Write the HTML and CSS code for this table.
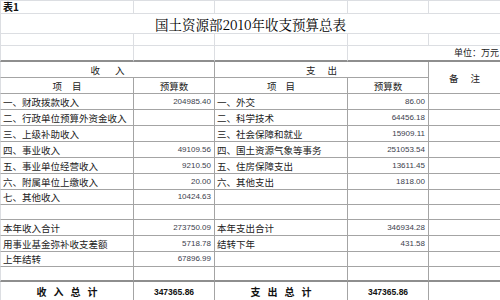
FILE: index.html
```html
<!DOCTYPE html>
<html lang="zh-CN">
<head>
<meta charset="utf-8">
<title>国土资源部2010年收支预算总表</title>
<link rel="stylesheet" href="styles.css">
</head>
<body>
<table class="sheet">
  <colgroup>
    <col class="c-item"><col class="c-num"><col class="c-item2"><col class="c-num"><col class="c-note">
  </colgroup>
  <tr class="r13 top">
    <td class="g tag">表1</td><td class="g"></td><td class="g"></td><td class="g"></td><td class="g last"></td>
  </tr>
  <tr class="r20 top">
    <td class="g title last" colspan="5">国土资源部2010年收支预算总表</td>
  </tr>
  <tr class="r12 top">
    <td class="g"></td><td class="g"></td><td class="g"></td><td class="g"></td><td class="g last"></td>
  </tr>
  <tr class="r16 unitrow">
    <td class="g"></td><td class="g"></td><td class="g"></td><td class="g unit last" colspan="2">单位：万元</td>
  </tr>
  <tr class="r16">
    <td class="center sp-in" colspan="2">收入</td>
    <td class="center sp-out" colspan="2">支出</td>
    <td class="center sp-note last" rowspan="2">备注</td>
  </tr>
  <tr class="r16">
    <td class="center sp-item">项目</td>
    <td class="center">预算数</td>
    <td class="center sp-item2">项目</td>
    <td class="center">预算数</td>
  </tr>
  <tr class="r16">
    <td>一、财政拨款收入</td><td class="num">204985.40</td>
    <td>一、外交</td><td class="num">86.00</td><td class="last"></td>
  </tr>
  <tr class="r16">
    <td>二、行政单位预算外资金收入</td><td class="num"></td>
    <td>二、科学技术</td><td class="num">64456.18</td><td class="last"></td>
  </tr>
  <tr class="r16">
    <td>三、上级补助收入</td><td class="num"></td>
    <td>三、社会保障和就业</td><td class="num">15909.11</td><td class="last"></td>
  </tr>
  <tr class="r16">
    <td>四、事业收入</td><td class="num">49109.56</td>
    <td>四、国土资源气象等事务</td><td class="num">251053.54</td><td class="last"></td>
  </tr>
  <tr class="r16">
    <td>五、事业单位经营收入</td><td class="num">9210.50</td>
    <td>五、住房保障支出</td><td class="num">13611.45</td><td class="last"></td>
  </tr>
  <tr class="r16">
    <td>六、附属单位上缴收入</td><td class="num">20.00</td>
    <td>六、其他支出</td><td class="num">1818.00</td><td class="last"></td>
  </tr>
  <tr class="r15">
    <td>七、其他收入</td><td class="num">10424.63</td>
    <td></td><td class="num"></td><td class="last"></td>
  </tr>
  <tr class="r15">
    <td></td><td class="num"></td><td></td><td class="num"></td><td class="last"></td>
  </tr>
  <tr class="r16">
    <td>本年收入合计</td><td class="num">273750.09</td>
    <td>本年支出合计</td><td class="num">346934.28</td><td class="last"></td>
  </tr>
  <tr class="r16">
    <td>用事业基金弥补收支差额</td><td class="num">5718.78</td>
    <td>结转下年</td><td class="num">431.58</td><td class="last"></td>
  </tr>
  <tr class="r15">
    <td>上年结转</td><td class="num">67896.99</td>
    <td></td><td class="num"></td><td class="last"></td>
  </tr>
  <tr class="r15 beforetotal">
    <td></td><td class="num"></td><td></td><td class="num"></td><td class="last"></td>
  </tr>
  <tr class="r20 total">
    <td class="center sp-total">收入总计</td><td class="center totnum">347365.86</td>
    <td class="center sp-total">支出总计</td><td class="center totnum">347365.86</td><td class="last"></td>
  </tr>
</table>
</body>
</html>
```
FILE: styles.css
```css
html, body {
  margin: 0;
  padding: 0;
  background: #ffffff;
}

body {
  font-family: "Noto Sans CJK SC", "Liberation Sans", sans-serif;
  color: #222222;
}

.sheet {
  border-collapse: separate;
  border-spacing: 0;
  table-layout: fixed;
  width: 500px;
}

.c-item { width: 134px; }
.c-num { width: 81px; }
.c-item2 { width: 133px; }
.c-note { width: 71px; }

.sheet td {
  padding: 0 2px;
  border-right: 1px solid #a4a4a4;
  border-bottom: 1px solid #a4a4a4;
  font-size: 9.5px;
  line-height: 12px;
  white-space: nowrap;
  overflow: hidden;
  vertical-align: middle;
}

.sheet td:first-child {
  border-left: 1px solid #dcdee2;
}

.sheet td.last {
  border-right: none;
}

.sheet td.g {
  border-color: #dcdee2;
}

.r12 { height: 12px; }
.r13 { height: 13px; }
.r15 { height: 15px; }
.r16 { height: 16px; }
.r20 { height: 20px; }

.top:first-child td {
  border-top: 1px solid #dcdee2;
}

.sheet .unitrow td {
  border-bottom: 2px solid #8e8e8e;
}

.sheet .beforetotal td {
  border-bottom: 2px solid #8e8e8e;
}

.sheet td.tag {
  font-weight: bold;
  font-size: 10px;
  color: #111111;
}

.sheet td.title {
  text-align: center;
  font-family: "Noto Serif CJK SC", "Liberation Serif", "Noto Sans CJK SC", serif;
  font-size: 13.5px;
  line-height: 18px;
  color: #000000;
}

.sheet td.unit {
  text-align: right;
  font-size: 9px;
  padding-right: 1px;
}

.center {
  text-align: center;
}

.sp-in { letter-spacing: 15px; text-indent: 15px; }
.sp-out { letter-spacing: 12px; text-indent: 12px; }
.sp-note { letter-spacing: 12px; text-indent: 12px; }
.sp-item { letter-spacing: 10px; text-indent: 10px; }
.sp-item2 { letter-spacing: 9px; text-indent: 9px; }

.sheet td.num {
  text-align: right;
  padding-right: 3px;
  font-family: "Liberation Sans", Arial, sans-serif;
  font-size: 8px;
  color: #3b3e4c;
}

.total td {
  font-weight: bold;
  color: #111111;
}

.sheet td.sp-total {
  font-size: 10px;
  letter-spacing: 7px;
  text-indent: 7px;
}

.sheet td.totnum {
  font-family: "Liberation Sans", Arial, sans-serif;
  font-size: 8.5px;
}
```
